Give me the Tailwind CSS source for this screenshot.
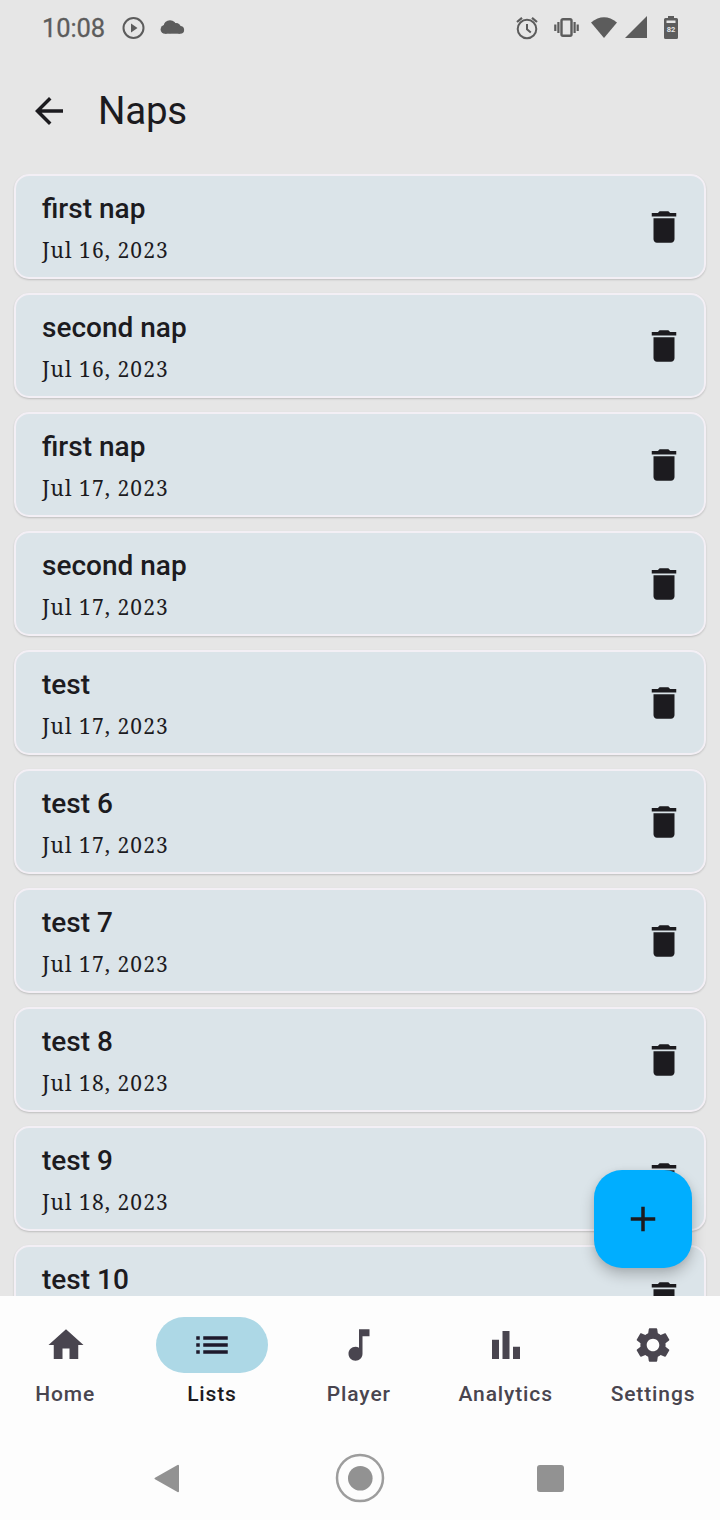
<!DOCTYPE html>
<html lang="en">
<head>
<meta charset="utf-8">
<title>Naps</title>
<script src="https://cdn.jsdelivr.net/npm/@tailwindcss/browser@4"></script>
</head>
<body class="bg-[#e6e6e6]">
<div class="relative flex h-[1520px] w-[720px] flex-col overflow-hidden bg-[#e6e6e6] font-['Roboto',sans-serif] text-[#1c1b1f]">
  <!-- Status bar -->
  <header class="flex h-[56px] shrink-0 items-center pr-[41px] pl-[42px] text-[#5c5c5c]">
    <span class="w-[63px] text-[25.5px] leading-[30px] tracking-[-0.1px] whitespace-nowrap [-webkit-text-stroke:0.3px_#5c5c5c]">10:08</span>
    <svg class="ml-[17px] size-[23px] shrink-0" viewBox="0 0 23 23"><circle cx="11.5" cy="11" r="10" fill="none" stroke="currentColor" stroke-width="2"/><path d="M9 6.500L15.500 11L9 15.500z" fill="currentColor"/></svg>
    <svg class="ml-[15px] h-[14px] w-[25px] shrink-0 -translate-y-px" viewBox="0 0 25 14" fill="currentColor"><circle cx="10" cy="6.700" r="6.500"/><circle cx="4.900" cy="9.400" r="4.300"/><circle cx="16" cy="8" r="5"/><circle cx="20.300" cy="9.900" r="3.800"/><path d="M5 8h15v5.700H5z"/></svg>
    <svg class="ml-auto size-[24px]" viewBox="0 0 24 24" fill="none" stroke="currentColor"><circle cx="12" cy="13" r="9.300" stroke-width="2"/><path d="M2 6L7 1.800M22 6L17 1.800" stroke-width="2.200"/><path d="M12 8V13.300L15.800 16.500" stroke-width="2"/></svg>
    <svg class="ml-[15px] h-[24px] w-[25px]" viewBox="0 0 25 24" fill="none" stroke="currentColor"><rect x="7.500" y="3.200" width="10" height="16.500" rx="1.500" stroke-width="2.400"/><path d="M4.400 6v11M20.600 6v11M1.300 8.500v6.500M23.700 8.500v6.500" stroke-width="2.200"/></svg>
    <svg class="ml-[12px] h-[24px] w-[26px]" viewBox="0 0 26 24"><path d="M0 6.500Q13-4 26 6.500L13 22z" fill="currentColor"/></svg>
    <svg class="ml-[8px] h-[24px] w-[22px]" viewBox="0 0 22 24"><path d="M22 0V22H0z" fill="currentColor"/></svg>
    <svg class="mr-[1px] ml-[17px] h-[24px] w-[14px]" viewBox="0 0 14 24"><path d="M4 0h6v2h2.500Q14 2 14 3.500v18Q14 23 12.500 23h-11Q0 23 0 21.500v-18Q0 2 1.500 2H4z" fill="currentColor"/><path d="M2.500 4.500h9v2.500h-9z" fill="#e6e6e6"/><text x="7" y="15.800" text-anchor="middle" font-family="Roboto" font-size="7.500" font-weight="700" fill="#e6e6e6">82</text></svg>
  </header>
  <!-- App bar -->
  <div class="flex h-[118px] shrink-0 items-start pt-[34px] pl-[28px]">
    <svg class="size-[42px]" viewBox="0 0 24 24" fill="currentColor"><path d="M20 11H7.830l5.590-5.590L12 4l-8 8 8 8 1.410-1.410L7.830 13H20v-2z"/></svg>
    <h1 class="ml-[28px] text-[38.500px] leading-[42px] tracking-[-0.25px]">Naps</h1>
  </div>
  <!-- Nap list -->
  <main id="list" class="flex h-[1122px] shrink-0 flex-col gap-[14px] overflow-hidden px-[14px]"></main>
  <!-- Bottom navigation -->
  <div class="z-20 h-[140px] shrink-0 bg-[#fdfdfd]">
  <nav class="mr-[0.6px] ml-[-0.8px] flex gap-[14px] pt-[21px] text-[21px] font-medium tracking-[0.875px] text-[#49454f]">
    <div class="flex flex-1 basis-0 flex-col items-center"><span class="flex h-[56px] w-[112px] items-center justify-center"><svg class="size-[42px]" viewBox="0 0 24 24" fill="currentColor"><path d="M10 20v-6h4v6h5v-8h3L12 3 2 12h3v8z"/></svg></span><span class="mt-[7px] ml-[-1px] leading-[28px]">Home</span></div>
    <div class="flex flex-1 basis-0 flex-col items-center text-[#1c1b1f]"><span class="flex h-[56px] w-[112px] items-center justify-center rounded-full bg-[#add8e6]"><svg class="size-[42px] text-[#1d192b]" viewBox="0 0 24 24" fill="currentColor"><path d="M3 13h2v-2H3v2zm0 4h2v-2H3v2zm0-8h2V7H3v2zm4 4h14v-2H7v2zm0 4h14v-2H7v2zM7 7v2h14V7H7z"/></svg></span><span class="mt-[7px] ml-[-1px] leading-[28px]">Lists</span></div>
    <div class="flex flex-1 basis-0 flex-col items-center"><span class="flex h-[56px] w-[112px] items-center justify-center"><svg class="size-[42px]" viewBox="0 0 24 24" fill="currentColor"><path d="M12 3v10.550c-.59-.34-1.270-.55-2-.55-2.210 0-4 1.790-4 4s1.790 4 4 4 4-1.790 4-4V7h4V3h-6z"/></svg></span><span class="mt-[7px] ml-[-1px] leading-[28px]">Player</span></div>
    <div class="flex flex-1 basis-0 flex-col items-center"><span class="flex h-[56px] w-[112px] items-center justify-center"><svg class="size-[42px]" viewBox="0 0 24 24" fill="currentColor"><path d="M4 9h4v11H4zM16 13h4v7h-4zM10 4h4v16h-4z"/></svg></span><span class="mt-[7px] ml-[-1px] leading-[28px]">Analytics</span></div>
    <div class="flex flex-1 basis-0 flex-col items-center"><span class="flex h-[56px] w-[112px] items-center justify-center"><svg class="size-[42px]" viewBox="0 0 24 24" fill="currentColor"><path d="M19.140 12.940c.04-.3.060-.61.060-.94 0-.32-.02-.64-.07-.94l2.030-1.580c.18-.14.230-.41.120-.61l-1.920-3.320c-.12-.22-.37-.29-.59-.22l-2.390.96c-.5-.38-1.030-.7-1.620-.94l-.36-2.540c-.04-.24-.24-.41-.48-.41h-3.840c-.24 0-.43.170-.47.410l-.36 2.540c-.59.240-1.130.570-1.620.940l-2.390-.96c-.22-.08-.47 0-.59.220L2.740 8.870c-.12.210-.08.470.12.610l2.030 1.580c-.05.3-.09.630-.09.940s.02.640.07.940l-2.030 1.580c-.18.140-.23.410-.12.610l1.920 3.320c.12.220.37.290.59.220l2.390-.96c.5.380 1.030.7 1.620.940l.36 2.540c.05.240.24.410.48.410h3.840c.24 0 .44-.17.470-.41l.36-2.540c.59-.24 1.130-.56 1.620-.94l2.390.96c.22.080.47 0 .59-.22l1.920-3.320c.12-.22.070-.47-.12-.61l-2.010-1.580zM12 15.600c-1.980 0-3.600-1.620-3.600-3.600s1.620-3.600 3.600-3.600 3.600 1.620 3.600 3.600-1.620 3.600-3.600 3.600z"/></svg></span><span class="mt-[7px] leading-[28px]">Settings</span></div>
  </nav>
  </div>
  <!-- System navigation -->
  <footer class="z-20 flex h-[84px] shrink-0 items-center justify-between bg-[#fdfdfd] pr-[156px] pl-[154px] text-[#929292]">
    <svg class="h-[29px] w-[26px]" viewBox="0 0 26 29"><path d="M1.500 14.500L24 1.800V27.200z" fill="currentColor" stroke="currentColor" stroke-width="2" stroke-linejoin="round"/></svg>
    <svg class="mr-[-2px] size-[50px]" viewBox="0 0 50 50"><circle cx="25" cy="25" r="23" fill="none" stroke="currentColor" stroke-opacity="0.9" stroke-width="2.500"/><circle cx="25.300" cy="25.300" r="12.300" fill="currentColor"/></svg>
    <span class="mt-px size-[27px] rounded-[3px] bg-[#929292]"></span>
  </footer>
  <!-- Floating add button -->
  <button class="absolute top-[1170px] left-[594px] z-10 flex size-[98px] items-center justify-center rounded-[28px] bg-[#00aeff] shadow-[0_7px_14px_rgba(0,0,0,0.22),0_1px_6px_rgba(0,0,0,0.06)]">
    <svg class="size-[42px]" viewBox="0 0 24 24" fill="#1c1b1f"><path d="M19 13h-6v6h-2v-6H5v-2h6V5h2v6h6v2z"/></svg>
  </button>
</div>
<script>
const naps = [
  ['first nap', 'Jul 16, 2023'], ['second nap', 'Jul 16, 2023'],
  ['first nap', 'Jul 17, 2023'], ['second nap', 'Jul 17, 2023'],
  ['test', 'Jul 17, 2023'], ['test 6', 'Jul 17, 2023'], ['test 7', 'Jul 17, 2023'],
  ['test 8', 'Jul 18, 2023'], ['test 9', 'Jul 18, 2023'], ['test 10'],
];
document.getElementById('list').innerHTML = naps.map(([name, date]) => `
  <article class="flex h-[105px] shrink-0 items-start justify-between rounded-[15px] border-2 border-[#f3eff5] bg-[#dbe4e9] pr-[19px] pl-[26px] shadow-[0_1px_2px_rgba(0,0,0,0.18)]">
    <div class="flex flex-col pt-[14px]">
      <span class="text-[28px] leading-[38px] font-medium">${name}</span>
      ${date ? `<span class="mt-[1px] font-['Noto_Serif','Droid_Serif','Liberation_Serif',serif] text-[21px] leading-[42px] tracking-[1.07px]">${date}</span>` : ''}
    </div>
    <svg class="mt-[30px] size-[42px]" viewBox="0 0 24 24" fill="currentColor"><path d="M6 19c0 1.100.9 2 2 2h8c1.100 0 2-.9 2-2V7H6v12zM19 4h-3.500l-1-1h-5l-1 1H5v2h14V4z"/></svg>
  </article>`).join('');
</script>
</body>
</html>
